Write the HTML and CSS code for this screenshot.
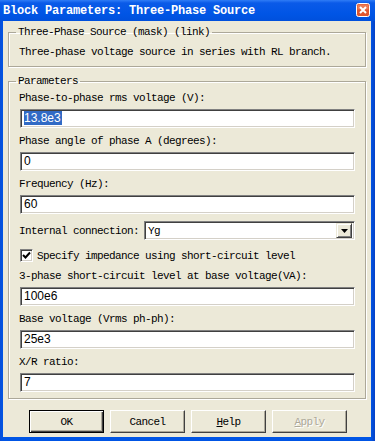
FILE: index.html
```html
<!DOCTYPE html>
<html lang="en">
<head>
  <meta charset="UTF-8" />
  <title>Block Parameters: Three-Phase Source</title>
  <link rel="stylesheet" href="styles.css">
</head>
<body>
  <div class="window">
    <div class="titlebar">
      <span class="title">Block Parameters: Three-Phase Source</span>
      <svg class="close" width="14" height="14" viewBox="0 0 14 14">
        <rect x="0.5" y="0.5" width="13" height="13" rx="2" fill="#e0552d" stroke="#ffffff" />
        <rect x="1.5" y="1.5" width="11" height="5" fill="#ec7b56" />
        <path d="M4 4 L10 10 M10 4 L4 10" stroke="#ffffff" stroke-width="2" />
      </svg>
    </div>

    <div class="client">
      <fieldset class="group group-mask">
        <legend>Three-Phase Source (mask) (link)</legend>
        <p class="desc">Three-phase voltage source in series with RL branch.</p>
      </fieldset>

      <fieldset class="group group-params">
        <legend>Parameters</legend>

        <div class="field">
          <div class="label">Phase-to-phase rms voltage (V):</div>
          <div class="edit"><span class="selected">13.8e3</span></div>
        </div>

        <div class="field">
          <div class="label">Phase angle of phase A (degrees):</div>
          <div class="edit">0</div>
        </div>

        <div class="field">
          <div class="label">Frequency (Hz):</div>
          <div class="edit">60</div>
        </div>

        <div class="field-inline">
          <div class="label">Internal connection:</div>
          <div class="combo">
            <span class="combo-text">Yg</span>
            <span class="combo-btn">
              <svg width="7" height="4" viewBox="0 0 7 4"><path d="M0 0 H7 L3.5 4 Z" fill="#000" /></svg>
            </span>
          </div>
        </div>

        <div class="check-row">
          <span class="checkbox">
            <svg width="9" height="9" viewBox="0 0 9 9">
              <path d="M1 4 L3.5 6.5 L8 1.5" stroke="#000" stroke-width="2" fill="none" />
            </svg>
          </span>
          <span class="label">Specify impedance using short-circuit level</span>
        </div>

        <div class="field">
          <div class="label">3-phase short-circuit level at base voltage(VA):</div>
          <div class="edit">100e6</div>
        </div>

        <div class="field">
          <div class="label">Base voltage (Vrms ph-ph):</div>
          <div class="edit">25e3</div>
        </div>

        <div class="field">
          <div class="label">X/R ratio:</div>
          <div class="edit">7</div>
        </div>
      </fieldset>

      <div class="buttons">
        <button class="btn btn-default">OK</button>
        <button class="btn">Cancel</button>
        <button class="btn"><u>H</u>elp</button>
        <button class="btn btn-disabled"><u>A</u>pply</button>
      </div>
    </div>
  </div>
</body>
</html>
```

FILE: styles.css
```css
:root {
  --xp-blue: #0055e5;
  --face: #ece9d8;
  --etch: #aca899;
  --shadow: #716f64;
}

body {
  margin: 0;
  padding: 0;
  width: 375px;
  height: 441px;
  overflow: hidden;
  background: var(--xp-blue);
}

/* window frame */
.window {
  display: flex;
  flex-direction: column;
  height: 441px;
  background: linear-gradient(90deg, #0a4fd8, var(--xp-blue) 3px, var(--xp-blue) 371px, #0741c4);
}

.titlebar {
  height: 21px;
  display: flex;
  align-items: center;
  justify-content: space-between;
  padding: 0 5px 0 3px;
  background: linear-gradient(180deg, #2f7cf6 0px, #0a5ae8 3px, #0055e5 14px, #0050dc 21px);
}

.title {
  font-family: "Liberation Mono", monospace;
  font-weight: 700;
  font-size: 12px;
  letter-spacing: -0.2px;
  color: #fff;
  margin-top: 1px;
}

.close {
  flex: none;
  display: block;
  margin-top: -1px;
}

/* dialog surface */
.client {
  flex: 1;
  margin: 0 4px 4px 3px;
  padding: 5px 5px 0;
  background: var(--face);
  font-family: "Liberation Mono", monospace;
  font-size: 11px;
  line-height: 12px;
  letter-spacing: -0.6px;
  color: #000;
}

.group {
  margin: 0;
  padding: 0 10px;
  min-width: 0;
  border: 1px solid var(--etch);
  box-shadow: inset 1px 1px 0 #fff, 1px 1px 0 #fff;
}

.group legend {
  padding: 0 2px;
  margin-left: -3px;
  line-height: 12px;
}

.group-mask {
  padding-top: 8px;
  padding-bottom: 8px;
}

.desc {
  margin: 0;
}

.group-params {
  margin-top: 8px;
  padding-top: 5px;
  padding-bottom: 6px;
}

/* rows */
.field {
  display: flex;
  flex-direction: column;
  gap: 5px;
  margin-bottom: 7px;
}

.field:last-child {
  margin-bottom: 0;
}

.edit,
.combo {
  height: 19px;
  box-sizing: border-box;
  background: #fff;
  border: 1px solid;
  border-color: #808080 #fff #fff #808080;
  box-shadow: inset 1px 1px 0 #404040, inset -1px -1px 0 #d4d0c8;
  margin-left: 1px;
}

.edit {
  padding: 2px 0 0 3px;
  font-family: "Liberation Sans", sans-serif;
  font-size: 12px;
  line-height: 13px;
  letter-spacing: 0;
}

.selected {
  background: #316ac5;
  color: #fff;
  padding: 0 1px 0 0;
}

.field-inline {
  display: flex;
  align-items: center;
  gap: 5px;
  margin-bottom: 9px;
}

.combo {
  flex: 1;
  display: flex;
  align-items: center;
  justify-content: space-between;
  padding: 0 2px 0 3px;
  margin-left: 0;
}

.combo-text {
  margin-top: 1px;
}

.combo-btn {
  width: 14px;
  height: 13px;
  display: flex;
  align-items: center;
  justify-content: center;
  background: var(--face);
  border: 1px solid;
  border-color: var(--face) #404040 #404040 var(--face);
  box-shadow: inset 1px 1px 0 #fff, inset -1px -1px 0 #808080;
}

.check-row {
  display: flex;
  align-items: center;
  gap: 4px;
  margin: 0 0 8px 1px;
  height: 13px;
}

.checkbox {
  width: 13px;
  height: 13px;
  box-sizing: border-box;
  display: flex;
  align-items: center;
  justify-content: center;
  background: #fff;
  border: 1px solid;
  border-color: #808080 #fff #fff #808080;
  box-shadow: inset 1px 1px 0 #404040, inset -1px -1px 0 #d4d0c8;
}

/* buttons */
.buttons {
  display: flex;
  gap: 6px;
  margin-top: 11px;
  padding-left: 21px;
}

.btn {
  width: 75px;
  height: 23px;
  padding: 0;
  background: var(--face);
  font-family: "Liberation Mono", monospace;
  font-size: 11px;
  letter-spacing: -0.6px;
  color: #000;
  border: 1px solid;
  border-color: #fff #404040 #404040 #fff;
  box-shadow: inset -1px -1px 0 #aca899;
  border-radius: 0;
}

.btn-default {
  border-color: #000;
  box-shadow: inset 1px 1px 0 #fff, inset -1px -1px 0 #404040, inset -2px -2px 0 #aca899;
}

.btn-disabled {
  color: #aca899;
  text-shadow: 1px 1px 0 #fff;
}
```
